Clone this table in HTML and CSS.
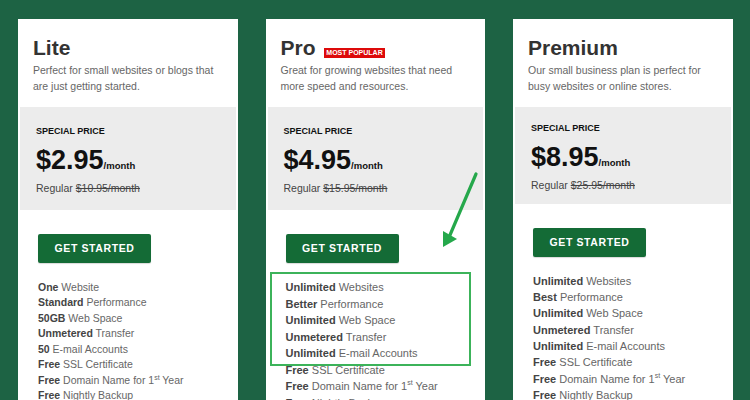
FILE: index.html
```html
<!DOCTYPE html>
<html>
<head>
<meta charset="utf-8">
<link rel="stylesheet" href="styles.css">
</head>
<body>
<div class="plans">
  <div class="card">
    <div class="head">
      <h2 class="title">Lite</h2>
      <p class="desc">Perfect for small websites or blogs that are just getting started.</p>
    </div>
    <div class="price">
      <div class="label">SPECIAL PRICE</div>
      <div class="amount">$2.95<span class="per">/month</span></div>
      <div class="regular">Regular <s>$10.95/month</s></div>
    </div>
    <div class="cta"><a class="btn">GET STARTED</a></div>
    <ul class="features f1">
      <li><b>One</b> Website</li>
      <li><b>Standard</b> Performance</li>
      <li><b>50GB</b> Web Space</li>
      <li><b>Unmetered</b> Transfer</li>
      <li><b>50</b> E-mail Accounts</li>
      <li><b>Free</b> SSL Certificate</li>
      <li><b>Free</b> Domain Name for 1<sup>st</sup> Year</li>
      <li><b>Free</b> Nightly Backup</li>
    </ul>
  </div>
  <div class="card">
    <div class="head">
      <h2 class="title">Pro <span class="badge">MOST POPULAR</span></h2>
      <p class="desc">Great for growing websites that need more speed and resources.</p>
    </div>
    <div class="price">
      <div class="label">SPECIAL PRICE</div>
      <div class="amount">$4.95<span class="per">/month</span></div>
      <div class="regular">Regular <s>$15.95/month</s></div>
    </div>
    <div class="cta"><a class="btn">GET STARTED</a></div>
    <ul class="features f2">
      <li><b>Unlimited</b> Websites</li>
      <li><b>Better</b> Performance</li>
      <li><b>Unlimited</b> Web Space</li>
      <li><b>Unmetered</b> Transfer</li>
      <li><b>Unlimited</b> E-mail Accounts</li>
      <li><b>Free</b> SSL Certificate</li>
      <li><b>Free</b> Domain Name for 1<sup>st</sup> Year</li>
      <li><b>Free</b> Nightly Backup</li>
    </ul>
    <div class="highlight"></div>
  </div>
  <div class="card">
    <div class="head">
      <h2 class="title">Premium</h2>
      <p class="desc">Our small business plan is perfect for busy websites or online stores.</p>
    </div>
    <div class="price compact">
      <div class="label">SPECIAL PRICE</div>
      <div class="amount">$8.95<span class="per">/month</span></div>
      <div class="regular">Regular <s>$25.95/month</s></div>
    </div>
    <div class="cta"><a class="btn">GET STARTED</a></div>
    <ul class="features f3">
      <li><b>Unlimited</b> Websites</li>
      <li><b>Best</b> Performance</li>
      <li><b>Unlimited</b> Web Space</li>
      <li><b>Unmetered</b> Transfer</li>
      <li><b>Unlimited</b> E-mail Accounts</li>
      <li><b>Free</b> SSL Certificate</li>
      <li><b>Free</b> Domain Name for 1<sup>st</sup> Year</li>
      <li><b>Free</b> Nightly Backup</li>
    </ul>
  </div>
</div>
<svg class="arrow" width="60" height="90" viewBox="0 0 60 90">
  <line x1="46" y1="9" x2="20" y2="70" stroke="#25a84b" stroke-width="3.2" stroke-linecap="round"/>
  <polygon points="13,82 13,66 27,74" fill="#25a84b"/>
</svg>
</body>
</html>
```

FILE: styles.css
```css
html, body {
  margin: 0;
  padding: 0;
  height: 400px;
  overflow: hidden;
  background: #1d6344;
  font-family: "Liberation Sans", Arial, sans-serif;
}

.plans {
  display: flex;
  gap: 28px;
  padding: 19px 0 0 18px;
}

.card {
  position: relative;
  width: 219.5px;
  height: 420px;
  flex: none;
  background: #fff;
}

.head {
  padding: 17px 15px 13px;
}

.title {
  margin: 0;
  font-size: 21px;
  line-height: 24px;
  font-weight: bold;
  color: #333;
}

.badge {
  display: inline-block;
  margin-left: 3px;
  padding: 0 2px;
  height: 10px;
  line-height: 10px;
  font-size: 7px;
  font-weight: bold;
  color: #fff;
  background: #dd0a0a;
  vertical-align: baseline;
}

.desc {
  margin: 2px 0 0;
  font-size: 10.5px;
  line-height: 16px;
  color: #666;
}

.price {
  margin: 0 2px;
  padding: 18px 16px 15px;
  background: #ececec;
  color: #111;
}

.price.compact {
  padding-top: 15px;
  padding-bottom: 12px;
}

.label {
  font-size: 9px;
  line-height: 12px;
  font-weight: bold;
}

.amount {
  margin-top: 7.5px;
  font-size: 27px;
  line-height: 30px;
  font-weight: bold;
}

.per {
  font-size: 9.5px;
  line-height: 1;
}

.regular {
  margin-top: 6.3px;
  font-size: 10.5px;
  line-height: 14px;
  color: #444;
}

.regular s {
  text-decoration-thickness: 1px;
}

.cta {
  padding: 24px 20px 0;
}

.btn {
  display: flex;
  align-items: center;
  justify-content: center;
  width: 113px;
  height: 29px;
  border-radius: 2px;
  background: #146b36;
  color: #fff;
  font-size: 10.5px;
  font-weight: bold;
  letter-spacing: 0.6px;
  box-shadow: 0 1px 1px rgba(0, 0, 0, 0.15);
}

.features {
  list-style: none;
  margin: 17px 0 0;
  padding: 0 0 0 20px;
  font-size: 10.5px;
  color: #666;
}

.features b {
  color: #444;
}

.features sup {
  font-size: 7px;
  line-height: 0;
}

.f1 { line-height: 15.5px; }
.f2 { font-size: 11px; line-height: 16.5px; margin-top: 16.5px; }
.f3 { font-size: 11px; line-height: 16.3px; margin-top: 16px; }

.highlight {
  position: absolute;
  left: 4px;
  top: 253px;
  width: 197px;
  height: 90px;
  border: 2px solid #3cb35a;
}

.arrow {
  position: absolute;
  left: 430px;
  top: 165px;
}
```
